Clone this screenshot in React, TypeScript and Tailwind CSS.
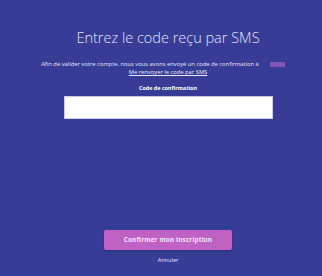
export default function App() {
  return (
    <div
      className="w-[322px] h-[276px] bg-[#373d97] flex flex-col items-center text-white overflow-hidden"
      style={{ fontFamily: '"Open Sans", "Liberation Sans", sans-serif' }}
    >
      <h1 className="mt-[28px] ml-[14px] text-[14.5px] leading-[20px] font-light text-[#e4e4f6]">
        Entrez le code reçu par SMS
      </h1>
      <p className="mt-[12px] ml-[4px] text-[5.8px] leading-[8px] text-[#e8e8f6] flex items-center">
        Afin de valider votre compte, nous vous avons envoyé un code de confirmation à
        <span className="ml-[11px] inline-block w-[15px] h-[5px] bg-[#7f55b8]" />
      </p>
      <a className="ml-[14px] text-[5.8px] leading-[8px] underline text-[#e8e8f6]">
        Me renvoyer le code par SMS
      </a>
      <div className="mt-[8px] ml-[14px] text-[5.4px] leading-[8px] font-bold">Code de confirmation</div>
      <input className="mt-[4px] ml-[14px] w-[209px] h-[23px] bg-white border border-[#c9cbe8] outline-none" />
      <button className="mt-[111px] ml-[14px] w-[128px] h-[20px] rounded-[2px] bg-[#c062c3] text-[6.3px] font-bold tracking-[0.2px] text-[#f6e6f8] shadow-[0_1px_2px_rgba(0,0,0,0.25)]">
        Confirmer mon inscription
      </button>
      <div className="mt-[6px] ml-[14px] text-[5.6px] leading-[8px] text-[#e4e4f6]">Annuler</div>
    </div>
  );
}
